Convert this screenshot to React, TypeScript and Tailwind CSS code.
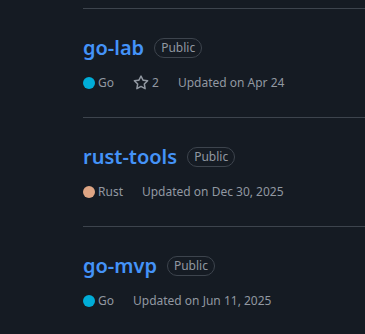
import React from 'react';

interface Repo {
    name: string;
    language: string;
    langColor: string;
    stars?: number;
    updated: string;
}

const repos: Repo[] = [
    { name: 'go-lab', language: 'Go', langColor: 'bg-[#00add8]', stars: 2, updated: 'Apr 24' },
    { name: 'rust-tools', language: 'Rust', langColor: 'bg-[#dea584]', updated: 'Dec 30, 2025' },
    { name: 'go-mvp', language: 'Go', langColor: 'bg-[#00add8]', updated: 'Jun 11, 2025' },
];

const IconStar: React.FC<{ className?: string }> = ({ className }) => (
    <svg viewBox="0 0 16 16" width="16" height="16" fill="currentColor" className={className}>
        <path d="M8 .25a.75.75 0 0 1 .673.418l1.882 3.815 4.21.612a.75.75 0 0 1 .416 1.279l-3.046 2.97.719 4.192a.751.751 0 0 1-1.088.791L8 12.347l-3.766 1.98a.75.75 0 0 1-1.088-.79l.72-4.194L.818 6.374a.75.75 0 0 1 .416-1.28l4.21-.611L7.327.668A.75.75 0 0 1 8 .25Zm0 2.445L6.615 5.5a.75.75 0 0 1-.564.41l-3.097.45 2.24 2.184a.75.75 0 0 1 .216.664l-.528 3.084 2.769-1.456a.75.75 0 0 1 .698 0l2.77 1.456-.53-3.084a.75.75 0 0 1 .216-.664l2.24-2.183-3.096-.45a.75.75 0 0 1-.564-.41L8 2.694Z" />
    </svg>
);

const RepoRow: React.FC<{ repo: Repo }> = ({ repo }) => (
    <li className="border-t border-[#3d444d] pt-6 pb-6">
        <div className="flex items-center h-[30px]">
            <a className="text-[20px] leading-[30px] font-semibold text-[#4493f8]">{repo.name}</a>
            <span className="ml-[10px] h-5 px-[6px] flex items-center rounded-full border border-[#3d444d] text-xs text-[#9198a1]">
                Public
            </span>
        </div>
        <div className="mt-[10px] h-5 flex items-center text-xs text-[#9198a1]">
            <span className="flex items-center mr-[19px]">
                <span className={`w-3 h-3 rounded-full ${repo.langColor}`}></span>
                <span className="ml-[3px]">{repo.language}</span>
            </span>
            {repo.stars !== undefined && (
                <span className="flex items-center mr-[19px]">
                    <IconStar className="mr-[3px]" />
                    <span>{repo.stars}</span>
                </span>
            )}
            <span>Updated on {repo.updated}</span>
        </div>
    </li>
);

export default function App() {
    return (
        <div className="w-[365px] h-[334px] overflow-hidden bg-[#151b23] pl-[83px] pt-2 font-['Noto_Sans',sans-serif]">
            <ul>
                {repos.map(r => (
                    <RepoRow key={r.name} repo={r} />
                ))}
            </ul>
        </div>
    );
}
